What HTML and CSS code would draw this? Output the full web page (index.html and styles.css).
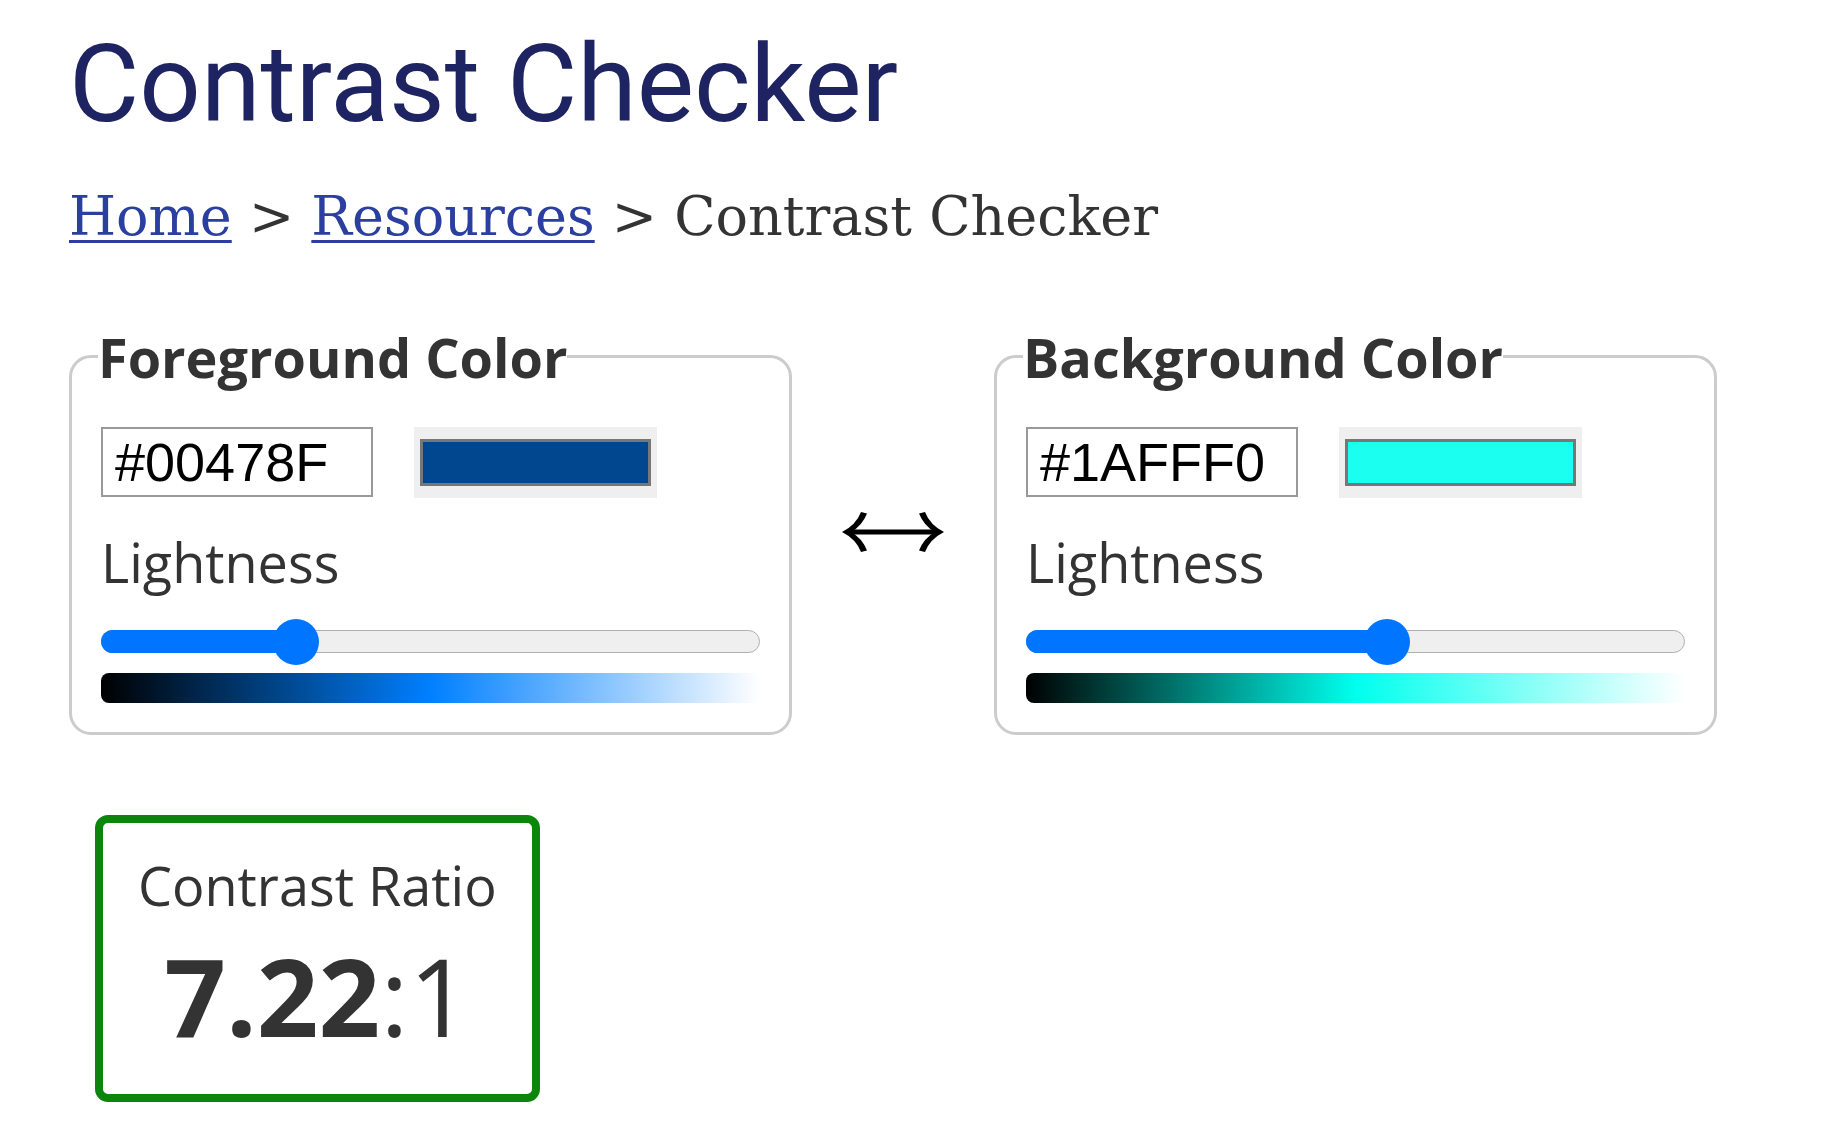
FILE: index.html
```html
<!DOCTYPE html>
<html lang="en">
<head>
<meta charset="utf-8">
<title>Contrast Checker</title>
<link rel="stylesheet" href="styles.css">
</head>
<body>
<main class="page">
  <h1 class="title">Contrast Checker</h1>
  <nav class="breadcrumb"><a href="#">Home</a> &gt; <a href="#">Resources</a> &gt; Contrast Checker</nav>

  <div class="pickers">
    <fieldset class="card">
      <legend class="card-title">Foreground Color</legend>
      <div class="hex-row">
        <input class="hex" type="text" value="#00478F">
        <div class="swatch"><div class="swatch-color fg"></div></div>
      </div>
      <div class="label">Lightness</div>
      <div class="slider" style="--v:0.28">
        <div class="track"><div class="fill"></div></div>
        <div class="thumb"></div>
      </div>
      <div class="gradient fg-grad"></div>
    </fieldset>

    <div class="swap" aria-label="Swap colors">
      <svg width="102" height="40" viewBox="0 0 102 40" aria-hidden="true">
        <path d="M6 20 H96" stroke="#000" stroke-width="5" fill="none"/>
        <path d="M0 20 Q14 13 19 0 L25 1.5 Q20 14 9 20 Q20 26 25 38.5 L19 40 Q14 27 0 20 Z" fill="#000"/>
        <path d="M102 20 Q88 13 83 0 L77 1.5 Q82 14 93 20 Q82 26 77 38.5 L83 40 Q88 27 102 20 Z" fill="#000"/>
      </svg>
    </div>

    <fieldset class="card">
      <legend class="card-title">Background Color</legend>
      <div class="hex-row">
        <input class="hex" type="text" value="#1AFFF0">
        <div class="swatch"><div class="swatch-color bg"></div></div>
      </div>
      <div class="label">Lightness</div>
      <div class="slider" style="--v:0.551">
        <div class="track"><div class="fill"></div></div>
        <div class="thumb"></div>
      </div>
      <div class="gradient bg-grad"></div>
    </fieldset>
  </div>

  <div class="result">
    <div class="result-label">Contrast Ratio</div>
    <div class="result-value"><strong>7.22</strong>:1</div>
  </div>
</main>
</body>
</html>
```

FILE: styles.css
```css
html, body {
  margin: 0;
  padding: 0;
  background: #fff;
}

.page {
  padding: 20px 0 40px 69px;
  font-family: "Open Sans", sans-serif;
  color: #333;
}

.title {
  margin: 0;
  font-family: Roboto, "Liberation Sans", sans-serif;
  font-weight: 400;
  font-size: 108px;
  line-height: 1.2;
  color: #1e2361;
}

.breadcrumb {
  margin-top: 35px;
  font-family: "DejaVu Serif", serif;
  font-size: 54px;
  line-height: normal;
  color: #333;
}

.breadcrumb a {
  color: #2a3f9f;
  text-decoration: underline;
  text-decoration-thickness: 3px;
  text-underline-offset: 5px;
}

.pickers {
  display: flex;
  align-items: center;
  gap: 50px;
  margin-top: 72px;
}

.card {
  box-sizing: border-box;
  width: 723px;
  margin: 0;
  padding: 33px 29px 29px 29px;
  border: 3px solid #cccccc;
  border-radius: 22px;
  min-width: 0;
}

.card-title {
  padding: 0;
  margin-left: -3px;
  font-family: "Open Sans", sans-serif;
  font-weight: 700;
  font-size: 54px;
  line-height: normal;
  color: #333;
}

.hex-row {
  display: flex;
  align-items: center;
  gap: 41px;
}

.hex {
  box-sizing: border-box;
  width: 272px;
  height: 70px;
  margin: 0;
  padding: 0 12px;
  border: 2px solid #999;
  border-radius: 0;
  font-family: "Liberation Sans", Arial, sans-serif;
  font-size: 54px;
  color: #000;
  background: #fff;
  outline: none;
}

.swatch {
  box-sizing: border-box;
  width: 243px;
  height: 71px;
  padding: 12px 6px;
  background: #efefef;
}

.swatch-color {
  box-sizing: border-box;
  height: 100%;
  border: 3px solid #777;
}

.swatch-color.fg { background: #00478f; }
.swatch-color.bg { background: #1afff0; }

.label {
  margin-top: 27px;
  font-size: 54px;
  line-height: normal;
  color: #333;
}

.slider {
  position: relative;
  height: 46px;
  margin-top: 20px;
  display: flex;
  align-items: center;
}

.track {
  position: relative;
  box-sizing: border-box;
  width: 100%;
  height: 23px;
  border: 1px solid #b0b0b0;
  border-radius: 12px;
  background: #efefef;
}

.fill {
  position: absolute;
  left: -1px;
  top: -1px;
  bottom: -1px;
  width: calc(var(--v) * (100% - 44px) + 24px);
  border-radius: 12px 0 0 12px;
  background: #0075ff;
}

.thumb {
  position: absolute;
  top: 0;
  left: calc(var(--v) * (100% - 46px));
  width: 46px;
  height: 46px;
  border-radius: 50%;
  background: #0075ff;
}

.gradient {
  height: 30px;
  margin-top: 8px;
  border-radius: 8px 0 0 8px;
}

.fg-grad {
  background: linear-gradient(to right, hsl(210, 100%, 0%), hsl(210, 100%, 50%), hsl(210, 100%, 100%));
}

.bg-grad {
  background: linear-gradient(to right, hsl(176, 100%, 0%), hsl(176, 100%, 50%), hsl(176, 100%, 100%));
}

.swap {
  flex: none;
  display: flex;
  margin-top: 10px;
}

.result {
  display: inline-block;
  margin: 80px 0 0 26px;
  padding: 25px 35px 25px;
  border: 8px solid #0a870a;
  border-radius: 13px;
  text-align: center;
  color: #333;
}

.result-label {
  font-size: 54px;
  line-height: normal;
}

.result-value {
  font-size: 108px;
  line-height: normal;
  font-weight: 400;
}

.result-value strong {
  font-weight: 700;
}
```
